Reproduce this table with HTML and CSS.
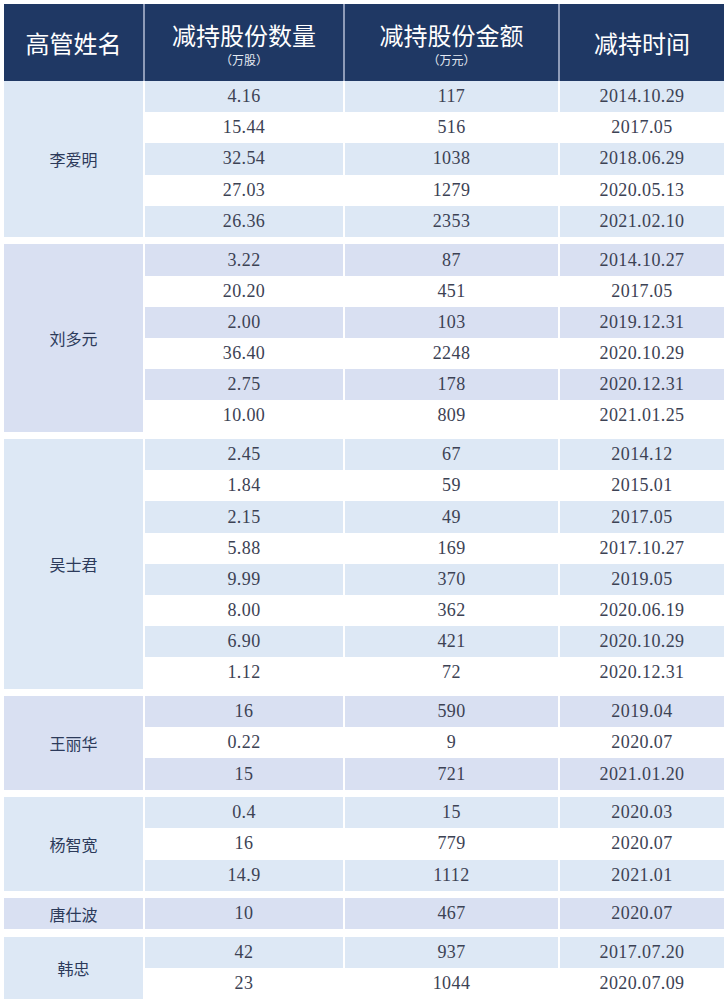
FILE: index.html
```html
<!DOCTYPE html>
<html lang="zh-CN">
<head>
<meta charset="utf-8">
<title>高管减持</title>
<link rel="stylesheet" href="styles.css">
</head>
<body>
<div class="table">
  <div class="head">
    <div class="hcell"><span class="ht">高管姓名</span></div>
    <div class="hcell"><span class="ht">减持股份数量</span><span class="hs">（万股）</span></div>
    <div class="hcell"><span class="ht">减持股份金额</span><span class="hs">（万元）</span></div>
    <div class="hcell"><span class="ht">减持时间</span></div>
  </div>

  <div class="group ga">
    <div class="name">李爱明</div>
    <div class="rows">
      <div class="row"><div>4.16</div><div>117</div><div>2014.10.29</div></div>
      <div class="row"><div>15.44</div><div>516</div><div>2017.05</div></div>
      <div class="row"><div>32.54</div><div>1038</div><div>2018.06.29</div></div>
      <div class="row"><div>27.03</div><div>1279</div><div>2020.05.13</div></div>
      <div class="row"><div>26.36</div><div>2353</div><div>2021.02.10</div></div>
    </div>
  </div>

  <div class="group gb">
    <div class="name">刘多元</div>
    <div class="rows">
      <div class="row"><div>3.22</div><div>87</div><div>2014.10.27</div></div>
      <div class="row"><div>20.20</div><div>451</div><div>2017.05</div></div>
      <div class="row"><div>2.00</div><div>103</div><div>2019.12.31</div></div>
      <div class="row"><div>36.40</div><div>2248</div><div>2020.10.29</div></div>
      <div class="row"><div>2.75</div><div>178</div><div>2020.12.31</div></div>
      <div class="row"><div>10.00</div><div>809</div><div>2021.01.25</div></div>
    </div>
  </div>

  <div class="group ga">
    <div class="name">吴士君</div>
    <div class="rows">
      <div class="row"><div>2.45</div><div>67</div><div>2014.12</div></div>
      <div class="row"><div>1.84</div><div>59</div><div>2015.01</div></div>
      <div class="row"><div>2.15</div><div>49</div><div>2017.05</div></div>
      <div class="row"><div>5.88</div><div>169</div><div>2017.10.27</div></div>
      <div class="row"><div>9.99</div><div>370</div><div>2019.05</div></div>
      <div class="row"><div>8.00</div><div>362</div><div>2020.06.19</div></div>
      <div class="row"><div>6.90</div><div>421</div><div>2020.10.29</div></div>
      <div class="row"><div>1.12</div><div>72</div><div>2020.12.31</div></div>
    </div>
  </div>

  <div class="group gb">
    <div class="name">王丽华</div>
    <div class="rows">
      <div class="row"><div>16</div><div>590</div><div>2019.04</div></div>
      <div class="row"><div>0.22</div><div>9</div><div>2020.07</div></div>
      <div class="row"><div>15</div><div>721</div><div>2021.01.20</div></div>
    </div>
  </div>

  <div class="group ga">
    <div class="name">杨智宽</div>
    <div class="rows">
      <div class="row"><div>0.4</div><div>15</div><div>2020.03</div></div>
      <div class="row"><div>16</div><div>779</div><div>2020.07</div></div>
      <div class="row"><div>14.9</div><div>1112</div><div>2021.01</div></div>
    </div>
  </div>

  <div class="group gb">
    <div class="name">唐仕波</div>
    <div class="rows">
      <div class="row"><div>10</div><div>467</div><div>2020.07</div></div>
    </div>
  </div>

  <div class="group ga">
    <div class="name">韩忠</div>
    <div class="rows">
      <div class="row"><div>42</div><div>937</div><div>2017.07.20</div></div>
      <div class="row"><div>23</div><div>1044</div><div>2020.07.09</div></div>
    </div>
  </div>
</div>
</body>
</html>
```

FILE: styles.css
```css
html, body {
  margin: 0;
  padding: 0;
  background: #ffffff;
}

.table {
  width: 720px;
  padding: 4px 0 0 4px;
  display: flex;
  flex-direction: column;
  gap: 7.5px;
}

.head {
  display: grid;
  grid-template-columns: 139px 198px 213px 164px;
  column-gap: 2px;
  height: 77px;
  background: #8e9bb8;
  margin-bottom: -7.5px;
}

.hcell {
  background: #1f3864;
  color: #ffffff;
  display: flex;
  flex-direction: column;
  align-items: center;
  justify-content: center;
  font-family: "Noto Sans CJK SC", "Noto Sans", sans-serif;
}

.ht {
  font-size: 24px;
  line-height: 34px;
}

.hs {
  font-size: 12px;
  line-height: 16px;
  color: #e6eaf2;
}

.group {
  display: flex;
  gap: 2px;
}

.name {
  width: 139px;
  flex: none;
  display: flex;
  align-items: center;
  justify-content: center;
  font-family: "Noto Sans CJK SC", "Noto Sans", sans-serif;
  font-size: 16px;
  color: #2c3a5a;
}

.rows {
  display: flex;
  flex-direction: column;
}

.row {
  display: grid;
  grid-template-columns: 198px 213px 164px;
  column-gap: 2px;
  height: 31.2px;
}

.row > div {
  display: flex;
  align-items: center;
  justify-content: center;
  font-family: "Liberation Serif", "Times New Roman", serif;
  font-size: 18px;
  letter-spacing: 0.4px;
  color: #3c4254;
  background: #ffffff;
}

.ga .name,
.ga .row:nth-child(odd) > div {
  background: #dde8f5;
}

.gb .name,
.gb .row:nth-child(odd) > div {
  background: #d9e0f2;
}
```
